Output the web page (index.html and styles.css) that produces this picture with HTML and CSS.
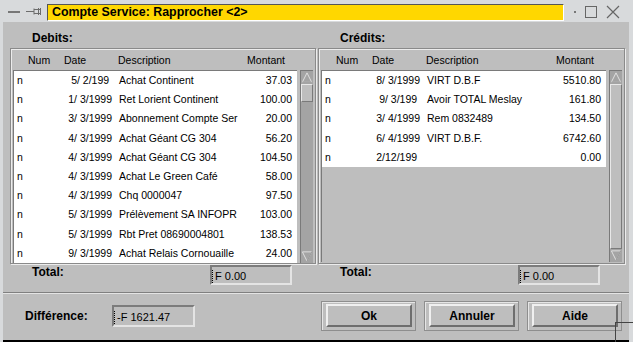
FILE: index.html
```html
<!DOCTYPE html>
<html lang="fr">
<head>
    <meta charset="UTF-8">
    <title>Compte Service: Rapprocher &lt;2&gt;</title>
    <link rel="stylesheet" href="styles.css">
</head>
<body>
    <div class="window">
        <div class="titlebar">
            <svg class="tb-menu" width="14" height="6" viewBox="0 0 14 6"><rect x="1" y="2" width="12" height="2" fill="#777"/></svg>
            <svg class="tb-pin" width="16" height="10" viewBox="0 0 16 10">
                <path d="M0 4.5H8M8 1.5V7.5M8 2.5H14M8 6.5H14M12.5 1V8M14.5 1V8" stroke="#6c6c6c" stroke-width="1" fill="none"/>
            </svg>
            <div class="title-field">Compte Service: Rapprocher &lt;2&gt;</div>
            <svg class="tb-btn" width="10" height="14" viewBox="0 0 10 14"><rect x="4" y="6" width="2" height="2" fill="#777"/></svg>
            <svg class="tb-btn" width="14" height="14" viewBox="0 0 14 14"><rect x="1.5" y="1.5" width="11" height="11" stroke="#666" fill="none"/></svg>
            <svg class="tb-btn" width="14" height="14" viewBox="0 0 14 14"><path d="M1 1L13 13M13 1L1 13" stroke="#666" stroke-width="1.2"/></svg>
        </div>

        <div class="dialog">
            <div class="panes">
                <!-- debits -->
                <section class="pane">
                    <h2 class="pane-label">Debits:</h2>
                    <div class="frame">
                        <div class="list-head">
                            <span>Num</span><span>Date</span><span>Description</span><span>Montant</span>
                        </div>
                        <div class="list">
                            <div class="row"><span>n</span><span class="date">5/ 2/199&nbsp;</span><span class="desc">Achat Continent</span><span class="amt">37.03</span></div>
                            <div class="row"><span>n</span><span class="date">1/ 3/1999</span><span class="desc">Ret Lorient Continent</span><span class="amt">100.00</span></div>
                            <div class="row"><span>n</span><span class="date">3/ 3/1999</span><span class="desc">Abonnement Compte Ser</span><span class="amt">20.00</span></div>
                            <div class="row"><span>n</span><span class="date">4/ 3/1999</span><span class="desc">Achat Géant CG 304</span><span class="amt">56.20</span></div>
                            <div class="row"><span>n</span><span class="date">4/ 3/1999</span><span class="desc">Achat Géant CG 304</span><span class="amt">104.50</span></div>
                            <div class="row"><span>n</span><span class="date">4/ 3/1999</span><span class="desc">Achat Le Green Café</span><span class="amt">58.00</span></div>
                            <div class="row"><span>n</span><span class="date">4/ 3/1999</span><span class="desc">Chq 0000047</span><span class="amt">97.50</span></div>
                            <div class="row"><span>n</span><span class="date">5/ 3/1999</span><span class="desc">Prélèvement SA INFOPR</span><span class="amt">103.00</span></div>
                            <div class="row"><span>n</span><span class="date">5/ 3/1999</span><span class="desc">Rbt Pret 08690004801</span><span class="amt">138.53</span></div>
                            <div class="row"><span>n</span><span class="date">9/ 3/1999</span><span class="desc">Achat Relais Cornouaille</span><span class="amt">24.00</span></div>
                        </div>
                        <div class="scrollbar">
                            <svg class="arrow" width="13" height="13" viewBox="0 0 13 13"><path d="M6.5 1.5L11.5 11.5H1.5Z" fill="none" stroke="#e4e4e4"/><path d="M11.5 11.5H1.5" stroke="#8a8a8a"/></svg>
                            <div class="thumb short"></div>
                            <div class="trough"></div>
                            <svg class="arrow" width="13" height="13" viewBox="0 0 13 13"><path d="M1.5 1.5H11.5L6.5 11.5Z" fill="none" stroke="#e4e4e4"/><path d="M11.5 1.5L6.5 11.5" stroke="#8a8a8a"/></svg>
                        </div>
                    </div>
                    <div class="total-row">
                        <span class="total-label">Total:</span>
                        <div class="field"><span class="caret"></span>F 0.00</div>
                    </div>
                </section>

                <!-- credits -->
                <section class="pane">
                    <h2 class="pane-label">Crédits:</h2>
                    <div class="frame">
                        <div class="list-head">
                            <span>Num</span><span>Date</span><span>Description</span><span>Montant</span>
                        </div>
                        <div class="list">
                            <div class="row"><span>n</span><span class="date">8/ 3/1999</span><span class="desc">VIRT D.B.F</span><span class="amt">5510.80</span></div>
                            <div class="row"><span>n</span><span class="date">9/ 3/199&nbsp;</span><span class="desc">Avoir TOTAL Meslay</span><span class="amt">161.80</span></div>
                            <div class="row"><span>n</span><span class="date">3/ 4/1999</span><span class="desc">Rem 0832489</span><span class="amt">134.50</span></div>
                            <div class="row"><span>n</span><span class="date">6/ 4/1999</span><span class="desc">VIRT D.B.F.</span><span class="amt">6742.60</span></div>
                            <div class="row"><span>n</span><span class="date">2/12/199&nbsp;</span><span class="desc"></span><span class="amt">0.00</span></div>
                        </div>
                        <div class="scrollbar">
                            <svg class="arrow" width="13" height="13" viewBox="0 0 13 13"><path d="M6.5 1.5L11.5 11.5H1.5Z" fill="none" stroke="#e4e4e4"/><path d="M11.5 11.5H1.5" stroke="#8a8a8a"/></svg>
                            <div class="thumb full"></div>
                            <svg class="arrow" width="13" height="13" viewBox="0 0 13 13"><path d="M1.5 1.5H11.5L6.5 11.5Z" fill="none" stroke="#e4e4e4"/><path d="M11.5 1.5L6.5 11.5" stroke="#8a8a8a"/></svg>
                        </div>
                    </div>
                    <div class="total-row">
                        <span class="total-label">Total:</span>
                        <div class="field"><span class="caret"></span>F 0.00</div>
                    </div>
                </section>
            </div>

            <div class="separator"></div>

            <div class="footer">
                <span class="diff-label">Différence:</span>
                <div class="field diff"><span class="caret"></span>-F 1621.47</div>
                <div class="buttons">
                    <div class="btn-frame"><button class="btn">Ok</button></div>
                    <div class="btn-frame"><button class="btn">Annuler</button></div>
                    <div class="btn-frame"><button class="btn">Aide</button></div>
                </div>
            </div>
            <div class="resize-corner"></div>
        </div>
    </div>
</body>
</html>
```

FILE: styles.css
```css
body {
    margin: 0;
    padding: 0;
    font-family: "Liberation Sans", Arial, sans-serif;
    font-size: 10.5px;
    color: #000;
    background-color: #d8dadc;
    overflow: hidden;
}
.window {
    width: 633px;
    height: 342px;
    display: flex;
    flex-direction: column;
}
.titlebar {
    height: 22px;
    display: flex;
    align-items: center;
    background-color: #d8dadc;
}
.tb-menu {
    margin-left: 7px;
    margin-top: 2px;
}
.tb-pin {
    margin-left: 5px;
    margin-top: 1px;
}
.title-field {
    width: 517px;
    height: 17px;
    margin-left: 5px;
    margin-top: 2px;
    box-sizing: border-box;
    background-color: #ffd700;
    border-top: 1px solid #555;
    border-left: 1px solid #555;
    border-bottom: 1px solid #fff;
    border-right: 1px solid #fff;
    padding-left: 4px;
    font-size: 12.4px;
    font-weight: bold;
    line-height: 15px;
    white-space: nowrap;
}
.tb-btn {
    margin-left: 6px;
    margin-top: 2px;
}
.tb-btn:nth-of-type(4) {
    margin-left: 4px;
}
.tb-btn:nth-of-type(5) {
    margin-left: 8px;
}
.dialog {
    flex: 1;
    position: relative;
    margin: 0 4px 0 3px;
    padding: 7px 4px 0 7px;
    background-color: #bebebe;
    border-bottom: 2px solid #000;
    display: flex;
    flex-direction: column;
}
.panes {
    display: flex;
    gap: 2px;
}
.pane {
    display: flex;
    flex-direction: column;
}
.pane:first-child {
    width: 306px;
}
.pane:last-child {
    width: 307px;
}
.pane-label {
    margin: 0;
    padding-left: 22px;
    height: 19px;
    line-height: 19px;
    font-size: 12px;
    font-weight: bold;
}
.frame {
    height: 216px;
    box-sizing: border-box;
    border: 1px solid #8a8a8a;
    box-shadow: inset 1px 1px 0 #ececec, 1px 1px 0 #ececec;
    padding: 1px 2px 1px 2px;
    display: grid;
    grid-template-columns: 1fr 13px;
    grid-template-rows: 20px 1fr;
    column-gap: 3px;
}
.list-head {
    grid-column: 1;
    display: grid;
    grid-template-columns: 36px 54px 1fr auto;
    align-items: center;
    padding: 0 12px 0 15px;
}
.list {
    grid-column: 1;
    grid-row: 2;
    background-color: #bebebe;
    border-top: 1px solid #7a7a7a;
    border-left: 1px solid #7a7a7a;
}
.row {
    height: 19.2px;
    line-height: 19.2px;
    display: grid;
    grid-template-columns: 30px 65px 132px 1fr;
    padding: 0 5px 0 3px;
    background-color: #fff;
    white-space: nowrap;
}
.row .date {
    text-align: right;
}
.row .desc {
    padding-left: 7px;
    overflow: hidden;
}
.row .amt {
    text-align: right;
}
.scrollbar {
    grid-column: 2;
    grid-row: 2;
    display: flex;
    flex-direction: column;
    background-color: #a4a4a4;
    border-top: 1px solid #7a7a7a;
    border-left: 1px solid #7a7a7a;
    box-sizing: border-box;
    width: 13px;
}
.arrow {
    display: block;
    flex: none;
    width: 12px;
    height: 13px;
}
.thumb {
    box-sizing: border-box;
    background-color: #bebebe;
    border-top: 1px solid #e8e8e8;
    border-left: 1px solid #e8e8e8;
    border-bottom: 1px solid #7a7a7a;
    border-right: 1px solid #7a7a7a;
}
.thumb.short {
    height: 18px;
}
.thumb.full {
    flex: 1;
}
.trough {
    flex: 1;
}
.total-row {
    display: flex;
    align-items: flex-start;
    padding-left: 22px;
    margin-top: 1px;
}
.total-label {
    width: 178px;
    line-height: 14px;
    font-size: 12px;
    font-weight: bold;
}
.field {
    width: 82px;
    height: 20px;
    box-sizing: border-box;
    border-top: 2px solid #7c7c7c;
    border-left: 2px solid #7c7c7c;
    border-bottom: 2px solid #e4e4e4;
    border-right: 2px solid #e4e4e4;
    display: flex;
    align-items: center;
    padding-top: 2px;
    font-size: 11px;
    white-space: nowrap;
}
.caret {
    width: 2px;
    height: 13px;
    margin-right: 1px;
    border-left: 1px dotted #000;
    box-sizing: border-box;
}
.separator {
    margin: 7px -4px 0 -7px;
    height: 1px;
    background-color: #808080;
    border-bottom: 1px solid #e4e4e4;
}
.footer {
    display: flex;
    align-items: center;
    height: 30px;
    margin-top: 7px;
    padding-left: 15px;
}
.diff-label {
    width: 87px;
    font-size: 12px;
    font-weight: bold;
}
.field.diff {
    width: 83px;
    height: 22px;
}
.buttons {
    margin-left: auto;
    margin-right: 3px;
    display: flex;
    gap: 8px;
}
.btn-frame {
    width: 95px;
    height: 30px;
    box-sizing: border-box;
    border: 1px solid #8e8e8e;
    box-shadow: inset 1px 1px 0 #e6e6e6;
    padding: 2px 3px 3px 4px;
}
.btn {
    width: 100%;
    height: 100%;
    margin: 0;
    padding: 0;
    background-color: #bebebe;
    border-top: 2px solid #f0f0f0;
    border-left: 2px solid #f0f0f0;
    border-bottom: 2px solid #6e6e6e;
    border-right: 2px solid #6e6e6e;
    font-family: "Liberation Sans", Arial, sans-serif;
    font-size: 12px;
    font-weight: bold;
    color: #000;
}
.resize-corner {
    position: absolute;
    right: -4px;
    bottom: -2px;
    width: 17px;
    height: 19px;
    border-top: 1px solid #444;
    border-left: 1px solid #444;
}
```
